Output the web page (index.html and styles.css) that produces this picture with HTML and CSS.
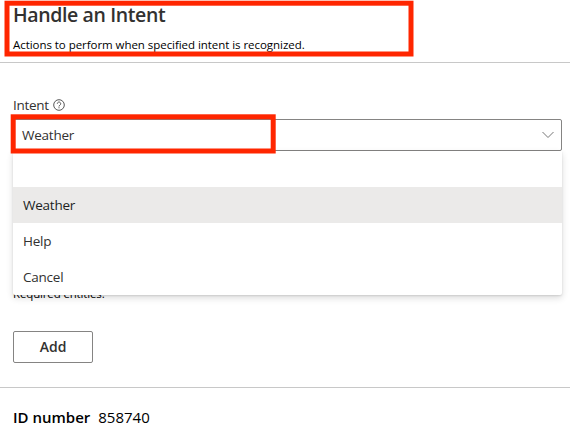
FILE: index.html
```
<!DOCTYPE html>
<html lang="en">
<head>
<meta charset="utf-8">
<title>Handle an Intent</title>
<link rel="stylesheet" href="styles.css">
</head>
<body>
<main class="panel">
  <header class="header">
    <h1 class="title">Handle an Intent</h1>
    <p class="subtitle">Actions to perform when specified intent is recognized.</p>
  </header>
  <section class="form">
    <div class="label"><span class="label-text">Intent</span>
      <svg class="help" width="12" height="12" viewBox="0 0 12 12" fill="none" stroke="#444"><circle cx="6" cy="6" r="5.3" stroke-width=".9"/><path d="M4.3 4.7a1.7 1.7 0 1 1 2.7 1.4C6.3 6.6 6 6.8 6 7.5" stroke-width=".9"/><path d="M6 8.3v1" stroke-width="1"/></svg>
    </div>
    <div class="select">
      <span class="select-text">Weather</span>
      <svg width="14" height="8" viewBox="0 0 14 8" fill="none" stroke="#777"><path d="M1.5 1l5.5 5.5L12.500 1"/></svg>
      <ul class="menu">
        <li></li>
        <li class="selected"><span>Weather</span></li>
        <li><span>Help</span></li>
        <li><span>Cancel</span></li>
      </ul>
    </div>
    <p class="required">Required entities.</p>
    <button class="add">Add</button>
  </section>
  <footer class="footer"><b class="id-label">ID number</b><span class="id-value">858740</span></footer>
</main>
<svg class="marks" width="570" height="443" fill="none" stroke="#ff2600" stroke-width="5"><rect x="7" y="3.2" width="404" height="50.8"/><rect x="13.2" y="116.8" width="260" height="34.2"/></svg>
</body>
</html>
```
FILE: styles.css
```
* { box-sizing: border-box; }
body { margin: 0; width: 570px; height: 443px; overflow: hidden; background: #fff; font-family: "Open Sans", sans-serif; color: #323130; }
h1, p, ul { margin: 0; padding: 0; }
.header { height: 63px; padding: 2px 13px 0; border-bottom: 1px solid #c8c8c8; }
.title { font-size: 19.5px; line-height: 26px; font-weight: 600; letter-spacing: -.38px; }
.subtitle { margin-top: 9px; font-size: 11.5px; line-height: 16px; letter-spacing: -.05px; color: #000; }
.form { height: 325px; padding: 32px 8px 0 13px; border-bottom: 1px solid #c8c8c8; }
.label { display: flex; align-items: center; gap: 4px; height: 20px; font-size: 13.5px; letter-spacing: -.28px; }
.help { position: relative; top: -.5px; }
.select { position: relative; display: flex; align-items: center; justify-content: space-between; height: 32px; margin-top: 4px; padding: 0 6px 0 8px; border: 1px solid #858483; border-radius: 2px; font-size: 13.5px; letter-spacing: -.23px; }
.menu { position: absolute; left: -1px; right: -1px; top: 31px; padding: 0; list-style: none; background: #fff; border-radius: 0 0 2px 2px; box-shadow: 0 3px 7px rgba(0,0,0,.14), 0 1px 2px rgba(0,0,0,.11); }
.menu li { display: flex; align-items: center; height: 36px; padding-left: 10px; }
.menu .selected { background: #ebeae9; color: #201f1e; }
.required { margin-top: 135px; font-size: 11.5px; line-height: 16px; letter-spacing: -.15px; color: #000; }
.add { display: block; width: 80px; height: 32px; margin-top: 29px; padding: 0 0 2px; border: 1px solid #858483; border-radius: 2px; background: #fff; color: #323130; font: 600 14px "Open Sans", sans-serif; }
.footer { display: flex; gap: 8px; padding: 18px 13px; font-size: 15px; line-height: 22px; color: #000; }
.id-label { font-weight: 600; }
.marks { position: absolute; left: 0; top: 0; pointer-events: none; }
```
